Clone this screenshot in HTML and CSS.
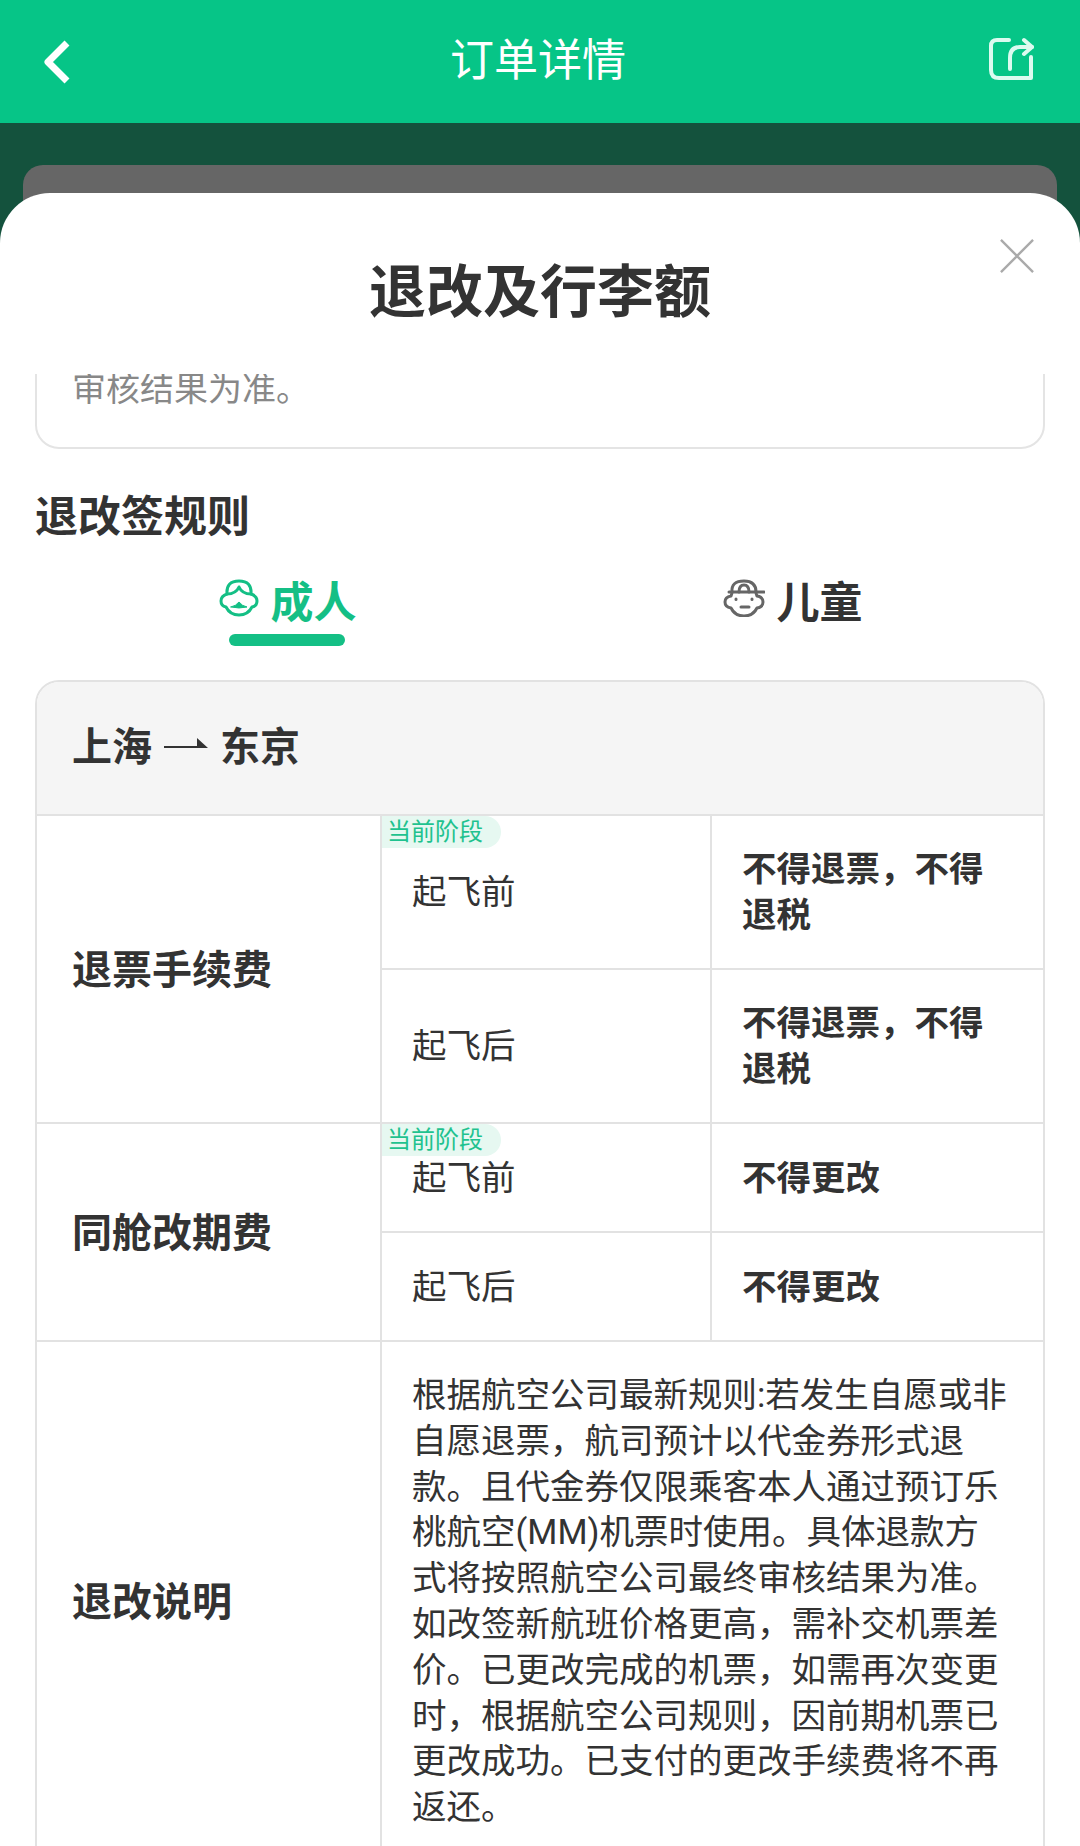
FILE: index.html
```html
<!DOCTYPE html>
<html lang="zh-CN">
	<head>
		<meta charset="UTF-8" />
		<meta name="viewport" content="width=device-width, initial-scale=1.0" />
		<title>退改及行李额</title>
		<link rel="stylesheet" href="styles.css">
	</head>
	<body>
		<header class="appbar">
			<svg class="appbar-back" viewBox="0 0 30 44" width="30" height="44"><path d="M25 3 L6 22 L25 41" /></svg>
			<h1 class="appbar-title">订单详情</h1>
			<svg class="appbar-share" viewBox="0 0 46 44" width="46" height="44"><path d="M21 3 H9 Q3 3 3 9 V33 Q3 41 11 41 H43 V20" /><path d="M22 32 V21 Q22 10 32 10 H44" /><path d="M36 3 L44 10 L36 17" /></svg>
		</header>

		<div class="backdrop">
			<div class="behind-card"></div>
		</div>

		<section class="sheet">
			<div class="sheet-head">
				<h2 class="sheet-title">退改及行李额</h2>
				<svg class="sheet-close" viewBox="0 0 36 36" width="34" height="34"><path d="M1 1 L35 35 M35 1 L1 35" /></svg>
			</div>

			<div class="sheet-body">
				<div class="notice">审核结果为准。</div>

				<h3 class="section-title">退改签规则</h3>

				<div class="tabs">
					<div class="tab tab-active">
						<svg class="tab-icon" viewBox="0 0 40 38" width="40" height="38">
							<path d="M8 15 Q7 2 20 2 Q33 2 32 15 Q38 17 38 22 Q38 27 33 28 Q29 36 20 36 Q11 36 7 28 Q2 27 2 22 Q2 17 8 15 Z" />
							<path d="M8 15 Q17 15 20 8 Q23 15 32 15" />
							<path class="tab-icon-fill" d="M12 28 Q17 27 20 23 Q23 27 28 28 Q20 30 12 28 Z" />
						</svg>
						<span>成人</span>
						<i class="tab-line"></i>
					</div>
					<div class="tab">
						<svg class="tab-icon" viewBox="0 0 42 38" width="42" height="38">
							<path d="M9 13 Q8 2 21 2 Q33 2 33 13" />
							<path d="M6 13 H41" />
							<path d="M9 13 Q9 15 8 17 Q2 18 2 23 Q2 28 8 29 Q12 37 21 37 Q30 37 34 29 Q40 28 40 23 Q40 18 34 17 Q33 15 33 13" />
							<path d="M16 13 Q16 6 21 6 Q26 6 26 13" />
							<path d="M18 28 H26" />
							<path d="M13 20 V20.5 M29 20 V20.5" />
						</svg>
						<span>儿童</span>
					</div>
				</div>

				<div class="rules">
					<div class="rules-route">
						<span>上海</span>
						<svg class="route-arrow" viewBox="0 0 44 12" width="44" height="12"><path d="M0 8 H33 V0 L44 10 H0 Z" /></svg>
						<span>东京</span>
					</div>
					<table class="rules-table">
						<colgroup>
							<col class="col-name">
							<col class="col-stage">
							<col class="col-value">
						</colgroup>
						<tr class="row-tall">
							<th rowspan="2">退票手续费</th>
							<td class="stage"><span class="stage-tag">当前阶段</span>起飞前</td>
							<td class="value">不得退票，不得退税</td>
						</tr>
						<tr class="row-tall">
							<td class="stage">起飞后</td>
							<td class="value">不得退票，不得退税</td>
						</tr>
						<tr class="row-short">
							<th rowspan="2">同舱改期费</th>
							<td class="stage"><span class="stage-tag">当前阶段</span>起飞前</td>
							<td class="value">不得更改</td>
						</tr>
						<tr class="row-short">
							<td class="stage">起飞后</td>
							<td class="value">不得更改</td>
						</tr>
						<tr>
							<th>退改说明</th>
							<td class="note" colspan="2">根据航空公司最新规则:若发生自愿或非自愿退票，航司预计以代金券形式退款。且代金券仅限乘客本人通过预订乐桃航空(MM)机票时使用。具体退款方式将按照航空公司最终审核结果为准。如改签新航班价格更高，需补交机票差价。已更改完成的机票，如需再次变更时，根据航空公司规则，因前期机票已更改成功。已支付的更改手续费将不再返还。</td>
						</tr>
					</table>
				</div>
			</div>
		</section>
	</body>
</html>
```

FILE: styles.css
```css
html,
body {
	margin: 0;
	height: 1846px;
	overflow: hidden;
}
body {
	position: relative;
	background: #14523d;
	font-family: Roboto, "Noto Sans CJK SC", "Noto Sans", sans-serif;
	color: #333;
}
h1,
h2,
h3 {
	margin: 0;
}

.appbar {
	height: 123px;
	background: #06c587;
	display: grid;
	grid-template-columns: 1fr auto 1fr;
	align-items: center;
	padding: 0 46px 0 42px;
	box-sizing: border-box;
}
.appbar svg {
	fill: none;
	stroke-linejoin: round;
}
.appbar-back {
	stroke: #fff;
	stroke-width: 7;
	margin-top: 1px;
}
.appbar-title {
	font-size: 44px;
	font-weight: 400;
	color: #fff;
	padding-bottom: 9px;
}
.appbar-share {
	justify-self: end;
	margin-bottom: 5px;
	stroke: #dcfbf0;
	stroke-width: 4;
	stroke-linecap: round;
}

.backdrop {
	padding: 42px 23px 0;
}
.behind-card {
	height: 100px;
	background: #666;
	border-radius: 20px;
}

.sheet {
	position: absolute;
	top: 193px;
	left: 0;
	right: 0;
	bottom: 0;
	background: #fff;
	border-radius: 50px 50px 0 0;
	display: flex;
	flex-direction: column;
}
.sheet-head {
	position: relative;
	height: 181px;
	flex-shrink: 0;
	display: flex;
	justify-content: center;
	padding-top: 61px;
	box-sizing: border-box;
}
.sheet-title {
	font-size: 57px;
	line-height: 78px;
	font-weight: 700;
	color: #333;
}
.sheet-close {
	position: absolute;
	top: 46px;
	right: 46px;
	fill: none;
	stroke: #aaa;
	stroke-width: 2.5;
}

.sheet-body {
	flex: 1;
	overflow: hidden;
	padding: 0 35px;
}
.notice {
	margin-top: -40px;
	height: 115px;
	padding: 39px 35px 0;
	box-sizing: border-box;
	border: 2px solid #e4e4e4;
	border-radius: 24px;
	font-size: 34px;
	line-height: 28px;
	color: #888;
}
.section-title {
	margin-top: 38px;
	font-size: 43px;
	line-height: 60px;
	font-weight: 700;
	color: #333;
}

.tabs {
	display: flex;
	margin-top: 26px;
	height: 107px;
}
.tab {
	position: relative;
	flex: 1;
	display: flex;
	align-items: flex-start;
	justify-content: center;
	gap: 12px;
	font-size: 43px;
	line-height: 60px;
	font-weight: 700;
	color: #333;
}
.tab-icon {
	margin-top: 6px;
	fill: none;
	stroke: #666;
	stroke-width: 3;
	stroke-linejoin: round;
	stroke-linecap: round;
}
.tab-active {
	color: #14bf85;
}
.tab-active .tab-icon {
	stroke: #14bf85;
}
.tab-icon-fill {
	fill: #14bf85;
	stroke-width: 1;
}
.tab-line {
	position: absolute;
	top: 61px;
	left: 194px;
	width: 116px;
	height: 12px;
	border-radius: 6px;
	background: #14bf85;
}

.rules {
	border: 2px solid #e2e2e2;
	border-bottom: 0;
	border-radius: 24px 24px 0 0;
	overflow: hidden;
}
.rules-route {
	height: 132px;
	background: #f5f5f5;
	display: flex;
	align-items: center;
	gap: 12px;
	padding: 0 35px 8px;
	box-sizing: border-box;
	font-size: 40px;
	font-weight: 700;
}
.route-arrow {
	fill: #333;
}
.rules-table {
	width: 100%;
	table-layout: fixed;
	border-collapse: collapse;
}
.col-name {
	width: 344px;
}
.col-stage {
	width: 330px;
}
.rules-table th,
.rules-table td {
	border: 2px solid #e2e2e2;
	box-sizing: border-box;
	text-align: left;
	vertical-align: middle;
}
.rules-table th:first-child {
	border-left: 0;
}
.rules-table td:last-child {
	border-right: 0;
}
.rules-table th {
	padding: 0 35px 5px;
	font-size: 40px;
	font-weight: 700;
}
.rules-table td {
	padding: 0 30px;
	font-size: 34.5px;
	line-height: 46px;
}
.row-tall {
	height: 154px;
}
.row-short {
	height: 109px;
}
.stage {
	position: relative;
}
.stage-tag {
	position: absolute;
	top: 0;
	left: 0;
	height: 32px;
	width: 119px;
	padding-left: 5px;
	box-sizing: border-box;
	border-radius: 0 16px 16px 0;
	background: #e6f8f1;
	color: #1fc28f;
	font-size: 24px;
	line-height: 32px;
}
.rules-table td.value {
	padding-right: 40px;
	font-weight: 700;
}
.rules-table td.note {
	padding: 31px 30px 30px;
	line-height: 45.8px;
}
```
